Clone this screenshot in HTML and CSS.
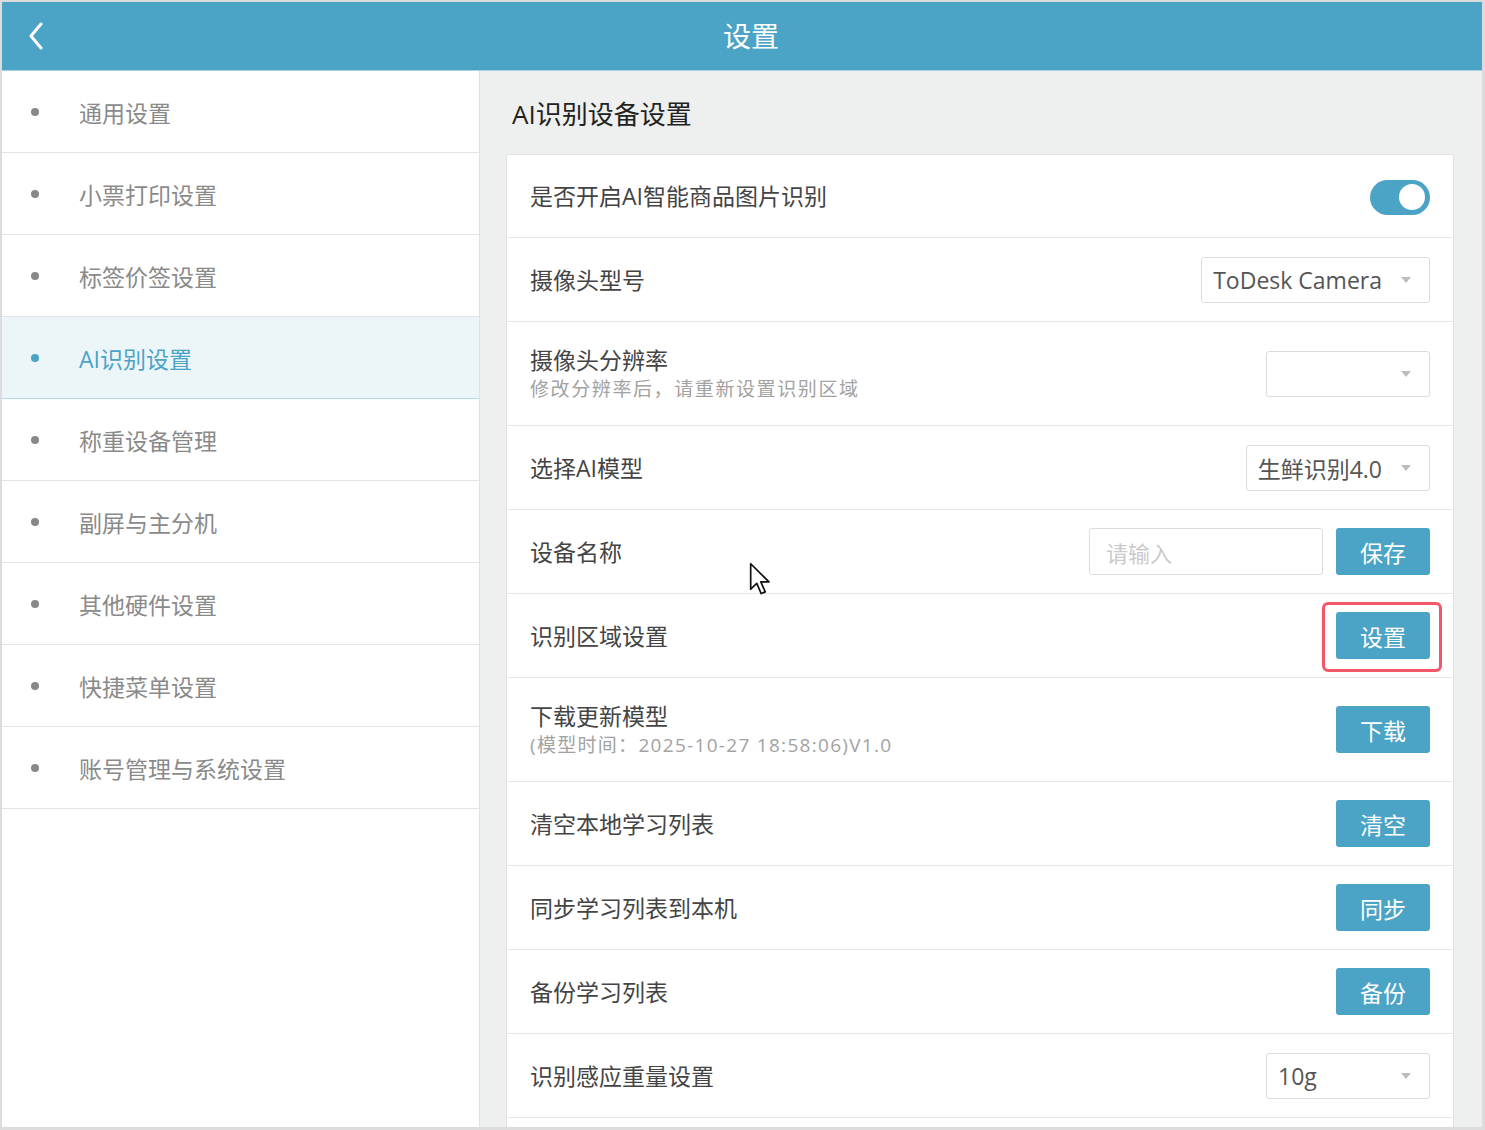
FILE: index.html
```html
<html>
<head>
  <meta charset="utf-8">
  <title>设置</title>
  <link rel="stylesheet" href="styles.css">
</head>
<body>
  <div class="app">

    <div class="topbar">
      <div class="back">
        <svg width="16" height="28" viewBox="0 0 16 28"><path d="M13 2 L3 14 L13 26" fill="none" stroke="#fff" stroke-width="3" stroke-linecap="round" stroke-linejoin="round"/></svg>
      </div>
      <div class="title">设置</div>
      <div></div>
    </div>

    <div class="body">
      <div class="sidebar">
        <div class="nav-item"><span class="dot"></span>通用设置</div>
        <div class="nav-item"><span class="dot"></span>小票打印设置</div>
        <div class="nav-item"><span class="dot"></span>标签价签设置</div>
        <div class="nav-item active"><span class="dot"></span>AI识别设置</div>
        <div class="nav-item"><span class="dot"></span>称重设备管理</div>
        <div class="nav-item"><span class="dot"></span>副屏与主分机</div>
        <div class="nav-item"><span class="dot"></span>其他硬件设置</div>
        <div class="nav-item"><span class="dot"></span>快捷菜单设置</div>
        <div class="nav-item"><span class="dot"></span>账号管理与系统设置</div>
      </div>

      <div class="main">
        <div class="page-title">AI识别设备设置</div>

        <div class="card">
          <div class="row">
            <div class="label">是否开启AI智能商品图片识别</div>
            <div class="toggle"><span class="knob"></span></div>
          </div>

          <div class="row">
            <div class="label">摄像头型号</div>
            <div class="select">ToDesk Camera<span class="arrow"></span></div>
          </div>

          <div class="row tall">
            <div>
              <div class="label">摄像头分辨率</div>
              <div class="sub">修改分辨率后，请重新设置识别区域</div>
            </div>
            <div class="select"><span class="arrow"></span></div>
          </div>

          <div class="row">
            <div class="label">选择AI模型</div>
            <div class="select">生鲜识别4.0<span class="arrow"></span></div>
          </div>

          <div class="row cursor-row">
            <div class="label">设备名称</div>
            <div class="group">
              <input class="text-input" placeholder="请输入">
              <button class="btn">保存</button>
            </div>
            <svg class="cursor" width="22" height="34" viewBox="0 0 13 20"><path d="M1 1 L1 16 L4.6 12.6 L7.2 18.6 L9.6 17.6 L7 11.7 L11.8 11.7 Z" fill="#fff" stroke="#111" stroke-width="1" stroke-linejoin="round"/></svg>
          </div>

          <div class="row">
            <div class="label">识别区域设置</div>
            <button class="btn marked">设置</button>
          </div>

          <div class="row tall">
            <div>
              <div class="label">下载更新模型</div>
              <div class="sub date">(模型时间：2025-10-27 18:58:06)V1.0</div>
            </div>
            <button class="btn">下载</button>
          </div>

          <div class="row">
            <div class="label">清空本地学习列表</div>
            <button class="btn">清空</button>
          </div>

          <div class="row">
            <div class="label">同步学习列表到本机</div>
            <button class="btn">同步</button>
          </div>

          <div class="row">
            <div class="label">备份学习列表</div>
            <button class="btn">备份</button>
          </div>

          <div class="row">
            <div class="label">识别感应重量设置</div>
            <div class="select">10g<span class="arrow"></span></div>
          </div>

          <div class="row"></div>
        </div>
      </div>
    </div>

  </div>
</body>
</html>
```

FILE: styles.css
```css
body {
	margin: 0;
	background: #dcdcdc;
	font-family: "Open Sans", "Noto Sans CJK SC", sans-serif;
}

.app {
	width: 1480px;
	height: 1125px;
	margin: 2px 0 0 2px;
	display: flex;
	flex-direction: column;
	overflow: hidden;
}

.topbar {
	height: 68px;
	background: #4ba3c6;
	border-bottom: 1px solid #a9d3e3;
	display: grid;
	grid-template-columns: 1fr auto 1fr;
	align-items: center;
	flex-shrink: 0;
}

.back {
	padding-left: 26px;
	display: flex;
	align-items: center;
}

.title {
	color: #fff;
	font-size: 28px;
	line-height: 1;
	margin-left: 18px;
}

.body {
	flex: 1;
	display: flex;
	min-height: 0;
}

/* left menu */
.sidebar {
	width: 477px;
	background: #fff;
	border-right: 1px solid #e1e1e1;
	flex-shrink: 0;
}

.nav-item {
	height: 81px;
	border-bottom: 1px solid #e3e3e3;
	display: flex;
	align-items: center;
	padding-left: 29px;
	font-size: 23px;
	color: #8a8a8a;
}

.dot {
	width: 8px;
	height: 8px;
	border-radius: 50%;
	background: #888;
	margin-right: 40px;
}

.nav-item.active {
	background: #ecf6f9;
	color: #4ba3c6;
	border-bottom-color: #b4dbe9;
}

.nav-item.active .dot {
	background: #4ba3c6;
}

/* right content */
.main {
	flex: 1;
	background: #eef0ef;
	padding: 0 28px 0 26px;
	overflow: hidden;
}

.page-title {
	height: 83px;
	display: flex;
	align-items: center;
	padding-left: 6px;
	font-size: 26px;
	color: #222;
}

.card {
	background: #fff;
	border: 1px solid #e3e3e3;
}

.row {
	min-height: 84px;
	box-sizing: border-box;
	padding: 0 23px;
	border-bottom: 1px solid #e6e6e6;
	display: flex;
	justify-content: space-between;
	align-items: center;
}

.row:first-child {
	min-height: 83px;
}

.row.tall {
	min-height: 104px;
}

.label {
	font-size: 23px;
	line-height: 30px;
	color: #444;
}

.sub {
	font-size: 19px;
	line-height: 28px;
	letter-spacing: 1.6px;
	color: #a2a2a2;
}

.sub.date {
	letter-spacing: 1.3px;
}

.toggle {
	width: 60px;
	height: 35px;
	border-radius: 18px;
	background: #4ba3c6;
	display: flex;
	align-items: center;
	justify-content: flex-end;
	padding-right: 5px;
	box-sizing: border-box;
	margin-top: 2px;
}

.knob {
	width: 26px;
	height: 26px;
	border-radius: 50%;
	background: #fff;
}

.select {
	min-width: 164px;
	height: 46px;
	box-sizing: border-box;
	border: 1px solid #dcdcdc;
	border-radius: 3px;
	padding: 0 47px 0 11px;
	display: flex;
	align-items: center;
	font-size: 23px;
	color: #555;
	position: relative;
}

.arrow {
	position: absolute;
	right: 18px;
	top: 19px;
	border-left: 5px solid transparent;
	border-right: 5px solid transparent;
	border-top: 6px solid #bdbdbd;
}

.group {
	display: flex;
	gap: 13px;
}

.text-input {
	width: 234px;
	height: 47px;
	box-sizing: border-box;
	border: 1px solid #dcdcdc;
	border-radius: 3px;
	padding-left: 16px;
	font-family: "Noto Sans CJK SC", sans-serif;
	font-size: 22px;
	outline: none;
}

.text-input::placeholder {
	color: #cacaca;
}

.btn {
	width: 94px;
	height: 47px;
	border: none;
	border-radius: 3px;
	background: #4ba3c6;
	color: #fff;
	font-family: "Noto Sans CJK SC", sans-serif;
	font-size: 23px;
	padding: 0;
}

.marked {
	position: relative;
}

.marked::after {
	content: "";
	position: absolute;
	top: -10px;
	right: -12px;
	bottom: -13px;
	left: -14px;
	border: 3px solid #f4566a;
	border-radius: 6px;
}

.cursor-row {
	position: relative;
}

.cursor {
	position: absolute;
	left: 242px;
	top: 52px;
}
```
